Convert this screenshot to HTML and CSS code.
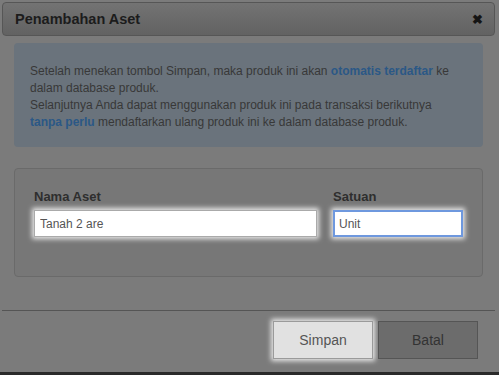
FILE: index.html
```html
<!DOCTYPE html>
<html lang="id">
<head>
  <meta charset="UTF-8" />
  <title>Penambahan Aset</title>
  <link rel="stylesheet" href="styles.css">
</head>
<body>
  <div class="dialog">
    <div class="titlebar">
      <span class="title">Penambahan Aset</span>
      <span class="close">&#10006;</span>
    </div>

    <div class="content">
      <div class="info">
        Setelah menekan tombol Simpan, maka produk ini akan <b>otomatis terdaftar</b> ke dalam database produk.<br>
        Selanjutnya Anda dapat menggunakan produk ini pada transaksi berikutnya <b>tanpa perlu</b> mendaftarkan ulang produk ini ke dalam database produk.
      </div>

      <div class="fieldset">
        <div class="field field-nama">
          <label>Nama Aset</label>
          <input type="text" class="glow" value="Tanah 2 are">
        </div>
        <div class="field field-satuan">
          <label>Satuan</label>
          <input type="text" class="glow focus" value="Unit">
        </div>
      </div>
    </div>

    <div class="buttonpane">
      <button class="btn btn-simpan glow">Simpan</button>
      <button class="btn btn-batal">Batal</button>
    </div>
  </div>
</body>
</html>
```

FILE: styles.css
```css
html, body {
  margin: 0;
  height: 375px;
  overflow: hidden;
}

body {
  background-color: #2a2a2a;
  font-family: 'Liberation Sans', Arial, sans-serif;
  color: #3a3a3a;
}

.dialog {
  background-color: #7b7b7b;
  height: 372px;
  padding: 2px 4px 0 2px;
  box-sizing: border-box;
  display: flex;
  flex-direction: column;
}

.titlebar {
  height: 34px;
  box-sizing: border-box;
  border: 1px solid #565656;
  border-radius: 4px;
  background: linear-gradient(to bottom, #737373, #626262);
  display: flex;
  align-items: center;
  justify-content: space-between;
  padding: 0 11px 0 12px;
}

.title {
  font-weight: bold;
  font-size: 14.5px;
  color: #1c1c1c;
}

.close {
  font-size: 13px;
  font-weight: bold;
  color: #141414;
}

.content {
  padding: 7px 12px 0 12px;
}

.info {
  background-color: #6a737c;
  border-radius: 4px;
  padding: 20px 30px 16px 16px;
  font-size: 12px;
  line-height: 17px;
  color: #383838;
}

.info b {
  color: #2b5886;
}

.fieldset {
  margin-top: 21px;
  height: 109px;
  box-sizing: border-box;
  border: 1px solid #6a6a6a;
  border-radius: 4px;
  background-color: #777777;
  padding: 20px 19px 0 19px;
  display: flex;
  gap: 16px;
}

.field {
  display: flex;
  flex-direction: column;
}

.field-nama {
  width: 285px;
}

.field-satuan {
  width: 130px;
}

.field label {
  font-weight: bold;
  font-size: 13px;
  color: #2e2e2e;
  height: 21px;
  line-height: 16px;
}

.field input {
  height: 27px;
  box-sizing: border-box;
  border: 1px solid #aaaaaa;
  background: #fff;
  padding: 0 5px;
  font-family: inherit;
  font-size: 12px;
  color: #555;
  outline: none;
}

.glow {
  box-shadow: 0 0 5px 2px rgba(255, 255, 255, 0.85);
}

.field input.focus {
  border: 2px solid #6e98de;
  padding: 0 4px;
}

.buttonpane {
  margin-top: 33px;
  border-top: 1px solid #555555;
  display: flex;
  justify-content: flex-end;
  gap: 5px;
  padding: 10px 17px 0 0;
}

.btn {
  width: 100px;
  height: 38px;
  box-sizing: border-box;
  font-family: inherit;
  font-size: 14px;
}

.btn-simpan {
  background-color: #e1e1e1;
  border: 1px solid #9a9a9a;
  color: #555;
}

.btn-batal {
  background-color: #6c6c6c;
  border: 1px solid #555;
  color: #333;
}
```
